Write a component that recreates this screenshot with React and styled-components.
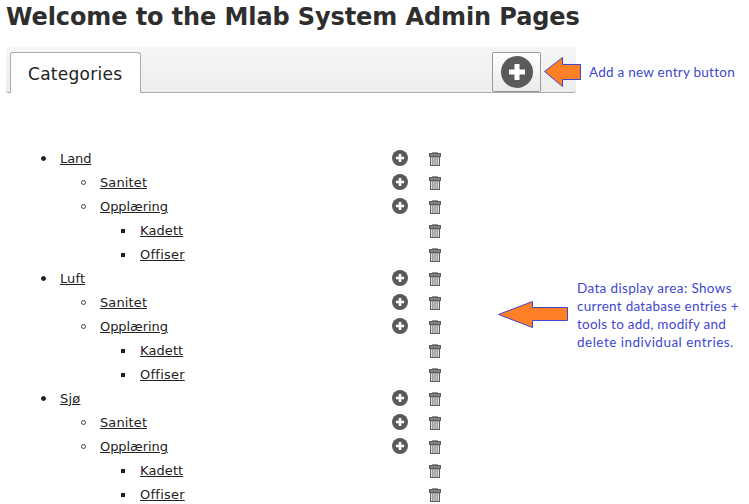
import React from "react";
import styled, { createGlobalStyle } from "styled-components";

const GlobalStyle = createGlobalStyle`
  body { margin: 0; background: #fff; overflow: hidden; }
`;

const Page = styled.main`
  position: relative;
  box-sizing: border-box;
  width: 749px;
  height: 504px;
  padding-left: 6px;
  overflow: hidden;
  color: #222;
  font-family: "DejaVu Sans", Verdana, sans-serif;
  font-variant-ligatures: none;
`;

const Title = styled.h1`
  margin: 0;
  height: 47px;
  font-size: 24px;
  line-height: 34px;
  font-weight: bold;
  letter-spacing: -0.1px;
  white-space: nowrap;
  color: #2e2e2e;
`;

const TabBar = styled.nav`
  display: flex;
  justify-content: space-between;
  align-items: flex-start;
  box-sizing: border-box;
  width: 570px;
  height: 46px;
  padding: 5px 35px 0 4px;
  border-bottom: 1px solid #aaa;
  border-radius: 3px;
  background: linear-gradient(#f6f6f6, #ededed);
`;

const Tab = styled.div`
  box-sizing: border-box;
  width: 131px;
  height: 41px;
  border: 1px solid #aaa;
  border-bottom: 0;
  border-radius: 3px 3px 0 0;
  background: #fff;
  padding-left: 17px;
  font-size: 17px;
  line-height: 42px;
  letter-spacing: 0.27px;
  white-space: nowrap;
`;

const AddButton = styled.button`
  display: flex;
  align-items: center;
  justify-content: center;
  box-sizing: border-box;
  width: 49px;
  height: 40px;
  padding: 0;
  border: 1px solid #999;
  border-radius: 2px;
  background: linear-gradient(#fff, #eaeaea);
`;

const Tree = styled.ul`
  margin: 53px 0 0;
  padding: 0;
  list-style: none;
  width: 440px;
`;

const Row = styled.li`
  display: grid;
  grid-template-columns: 386px 37px 12px;
  align-items: center;
  height: 24px;
`;

const Entry = styled.div`
  display: flex;
  align-items: center;
  padding-left: ${(p) => 34 + p.$level * 40}px;
  font-size: 13px;
  line-height: 24px;
`;

const Bullet = styled.span`
  box-sizing: border-box;
  flex: none;
  width: ${(p) => (p.$level === 2 ? 4 : 5)}px;
  height: ${(p) => (p.$level === 2 ? 4 : 5)}px;
  margin-left: ${(p) => (p.$level === 1 ? 0.5 : 1)}px;
  margin-right: ${(p) => (p.$level === 2 ? 15 : p.$level === 1 ? 14.5 : 14)}px;
  margin-top: 1px;
  border: 1px solid ${(p) => (p.$level === 1 ? "#444" : "#222")};
  border-radius: ${(p) => (p.$level === 2 ? 0 : "50%")};
  background: ${(p) => (p.$level === 1 ? "transparent" : "#222")};
`;

const Link = styled.a`
  margin-top: 2px;
  line-height: 22px;
  letter-spacing: ${(p) => p.$track}px;
  color: #222;
  text-decoration: underline;
  text-decoration-thickness: 1px;
  text-underline-offset: 1px;
`;

const Slot = styled.span`
  display: flex;
`;

const TrashSlot = styled(Slot)`
  padding-top: 2px;
`;

const Note = styled.p`
  position: absolute;
  left: ${(p) => p.$x}px;
  top: ${(p) => p.$y}px;
  margin: 0;
  color: #3f48cc;
  font: 13.5px/18px Lato, "Open Sans", sans-serif;
  white-space: nowrap;
`;

const NoteLine = styled.span`
  display: block;
  letter-spacing: ${(p) => p.$track}px;
`;

const ArrowShape = styled.svg`
  position: absolute;
  left: ${(p) => p.$x}px;
  top: ${(p) => p.$y}px;
  fill: #ff7f27;
  stroke: #3f48cc;
`;

const PlusIcon = ({ size }) => (
  <svg width={size} height={size} viewBox="0 0 32 32">
    <circle cx="16" cy="16" r="16" fill="#5a5a5a" />
    <path d="M13.5 8h5v5.5H24v5h-5.5V24h-5v-5.5H8v-5h5.5z" fill="#fff" />
  </svg>
);

const TrashIcon = () => (
  <svg width="12" height="14" viewBox="0 0 12 14">
    <path d="M3 0h6v1H3z" fill="#999" />
    <path d="M0 1h12v4H0z" fill="#5e5e5e" />
    <path d="M1 2h10v2H1z" fill="#808080" />
    <path d="M1 5h10v9H1z" fill="#5e5e5e" />
    <path d="M2.2 5.3h1.2v7.7H2.2zM4.4 5.3h1.1v7.7H4.4zM6.5 5.3h1.1v7.7H6.5zM8.6 5.3h1.2v7.7H8.6z" fill="#fff" />
  </svg>
);

const groups = [
  ["Land", 0, -0.1],
  ["Luft", 0, 0.1],
  ["Sjø", 0, 0.2],
];
const children = [
  ["Sanitet", 1, 0.12],
  ["Opplæring", 1, -0.07],
  ["Kadett", 2, 0.1],
  ["Offiser", 2, 0.25],
];
const entries = groups.flatMap((group) => [group, ...children]);

export default function App() {
  return (
    <Page>
      <GlobalStyle />
      <Title>Welcome to the Mlab System Admin Pages</Title>
      <TabBar>
        <Tab>Categories</Tab>
        <AddButton aria-label="Add entry"><PlusIcon size={32} /></AddButton>
      </TabBar>
      <Tree>
        {entries.map(([name, level, track], i) => (
          <Row key={i}>
            <Entry $level={level}>
              <Bullet $level={level} />
              <Link $track={track}>{name}</Link>
            </Entry>
            <Slot>{level < 2 && <PlusIcon size={16} />}</Slot>
            <TrashSlot><TrashIcon /></TrashSlot>
          </Row>
        ))}
      </Tree>
      <ArrowShape $x={544} $y={57} width="38" height="31">
        <path d="M.5 14.5 18.5.5v7h18v15h-18v7z" />
      </ArrowShape>
      <Note $x={589} $y={63}><NoteLine $track={0.25}>Add a new entry button</NoteLine></Note>
      <ArrowShape $x={498} $y={301} width="71" height="28">
        <path d="M.5 13.5 34.5.5v6h35v13h-35v7z" />
      </ArrowShape>
      <Note $x={577} $y={279}>
        <NoteLine $track={0.35}>Data display area: Shows</NoteLine>
        <NoteLine $track={0.28}>current database entries +</NoteLine>
        <NoteLine $track={0.25}>tools to add, modify and</NoteLine>
        <NoteLine $track={0.48}>delete individual entries.</NoteLine>
      </Note>
    </Page>
  );
}
